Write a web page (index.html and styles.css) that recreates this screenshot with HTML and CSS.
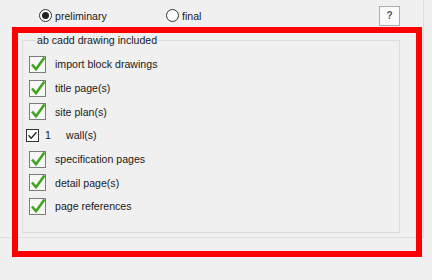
FILE: index.html
```html
<!DOCTYPE html>
<html>
  <head>
    <title>Drawing Options</title>
    <link rel="stylesheet" href="styles.css">
  </head>
  <body>
    <div class="panel">
      <div class="top-row">
        <label class="radio-option first">
          <span class="radio checked"></span>
          <span>preliminary</span>
        </label>
        <label class="radio-option">
          <span class="radio"></span>
          <span>final</span>
        </label>
        <button class="help-btn">?</button>
      </div>
      <fieldset class="group">
        <legend>ab cadd drawing included</legend>
        <div class="row">
          <svg class="big-check" width="17" height="17" viewBox="0 0 17 17"><rect x="0.5" y="0.5" width="16" height="16" fill="#f7f7f7" stroke="#7c7c7c"/><polyline points="3,8.5 7,13.2 15.5,1.5" fill="none" stroke="#3ea51c" stroke-width="2.6"/></svg>
          <span>import block drawings</span>
        </div>
        <div class="row">
          <svg class="big-check" width="17" height="17" viewBox="0 0 17 17"><rect x="0.5" y="0.5" width="16" height="16" fill="#f7f7f7" stroke="#7c7c7c"/><polyline points="3,8.5 7,13.2 15.5,1.5" fill="none" stroke="#3ea51c" stroke-width="2.6"/></svg>
          <span>title page(s)</span>
        </div>
        <div class="row">
          <svg class="big-check" width="17" height="17" viewBox="0 0 17 17"><rect x="0.5" y="0.5" width="16" height="16" fill="#f7f7f7" stroke="#7c7c7c"/><polyline points="3,8.5 7,13.2 15.5,1.5" fill="none" stroke="#3ea51c" stroke-width="2.6"/></svg>
          <span>site plan(s)</span>
        </div>
        <div class="row">
          <svg class="small-check" width="13" height="13" viewBox="0 0 13 13"><rect x="0.5" y="0.5" width="12" height="12" fill="#fff" stroke="#333"/><polyline points="2.5,6.3 5.2,9.2 10.5,3.3" fill="none" stroke="#222" stroke-width="1.3"/></svg>
          <span class="count">1</span>
          <span>wall(s)</span>
        </div>
        <div class="row">
          <svg class="big-check" width="17" height="17" viewBox="0 0 17 17"><rect x="0.5" y="0.5" width="16" height="16" fill="#f7f7f7" stroke="#7c7c7c"/><polyline points="3,8.5 7,13.2 15.5,1.5" fill="none" stroke="#3ea51c" stroke-width="2.6"/></svg>
          <span>specification pages</span>
        </div>
        <div class="row">
          <svg class="big-check" width="17" height="17" viewBox="0 0 17 17"><rect x="0.5" y="0.5" width="16" height="16" fill="#f7f7f7" stroke="#7c7c7c"/><polyline points="3,8.5 7,13.2 15.5,1.5" fill="none" stroke="#3ea51c" stroke-width="2.6"/></svg>
          <span>detail page(s)</span>
        </div>
        <div class="row">
          <svg class="big-check" width="17" height="17" viewBox="0 0 17 17"><rect x="0.5" y="0.5" width="16" height="16" fill="#f7f7f7" stroke="#7c7c7c"/><polyline points="3,8.5 7,13.2 15.5,1.5" fill="none" stroke="#3ea51c" stroke-width="2.6"/></svg>
          <span>page references</span>
        </div>
      </fieldset>
    </div>
    <!-- red annotation frame drawn over the group -->
    <div class="highlight"></div>
  </body>
</html>
```

FILE: styles.css
```css
body {
  margin: 0;
  width: 432px;
  height: 280px;
  background: #f0f0f0;
  font-family: "Liberation Sans", Arial, sans-serif;
  font-size: 10.6px;
  color: #1a1a1a;
  position: relative;
  overflow: hidden;
}

.panel {
  width: 423px;
  height: 237px;
  border-right: 1px solid #dedede;
  border-bottom: 1px solid #dedede;
  box-sizing: content-box;
}

.top-row {
  display: flex;
  align-items: center;
  height: 31px;
  padding-left: 39px;
  padding-right: 23px;
}

.radio-option {
  display: flex;
  align-items: center;
  gap: 3px;
}

.radio-option.first {
  width: 127px;
}

.radio {
  width: 13px;
  height: 13px;
  box-sizing: border-box;
  border: 1px solid #333;
  border-radius: 50%;
  background: #fff;
  position: relative;
}

.radio.checked::after {
  content: "";
  position: absolute;
  left: 2px;
  top: 2px;
  width: 7px;
  height: 7px;
  border-radius: 50%;
  background: #222;
}

.help-btn {
  margin-left: auto;
  width: 21px;
  height: 20px;
  padding: 0;
  border: 1px solid #adadad;
  background: #fbfbfb;
  font-family: "Liberation Sans", Arial, sans-serif;
  font-size: 10px;
  font-weight: bold;
  color: #555;
}

.group {
  margin: 3px 23px 0 22px;
  padding: 5.5px 0 0 6px;
  height: 199px;
  box-sizing: border-box;
  border: 1px solid #dcdcdc;
}

.group legend {
  margin-left: 7px;
  padding: 0 1px;
  line-height: 13px;
}

.row {
  display: flex;
  align-items: center;
  height: 23.7px;
}

.big-check {
  margin-right: 9px;
  flex-shrink: 0;
}

.small-check {
  margin-left: -3px;
  flex-shrink: 0;
}

.count {
  margin-left: 6px;
  width: 21px;
}

.highlight {
  position: absolute;
  left: 12px;
  top: 27px;
  width: 410px;
  height: 230px;
  box-sizing: border-box;
  border: 6px solid #ff0000;
  pointer-events: none;
}
```
